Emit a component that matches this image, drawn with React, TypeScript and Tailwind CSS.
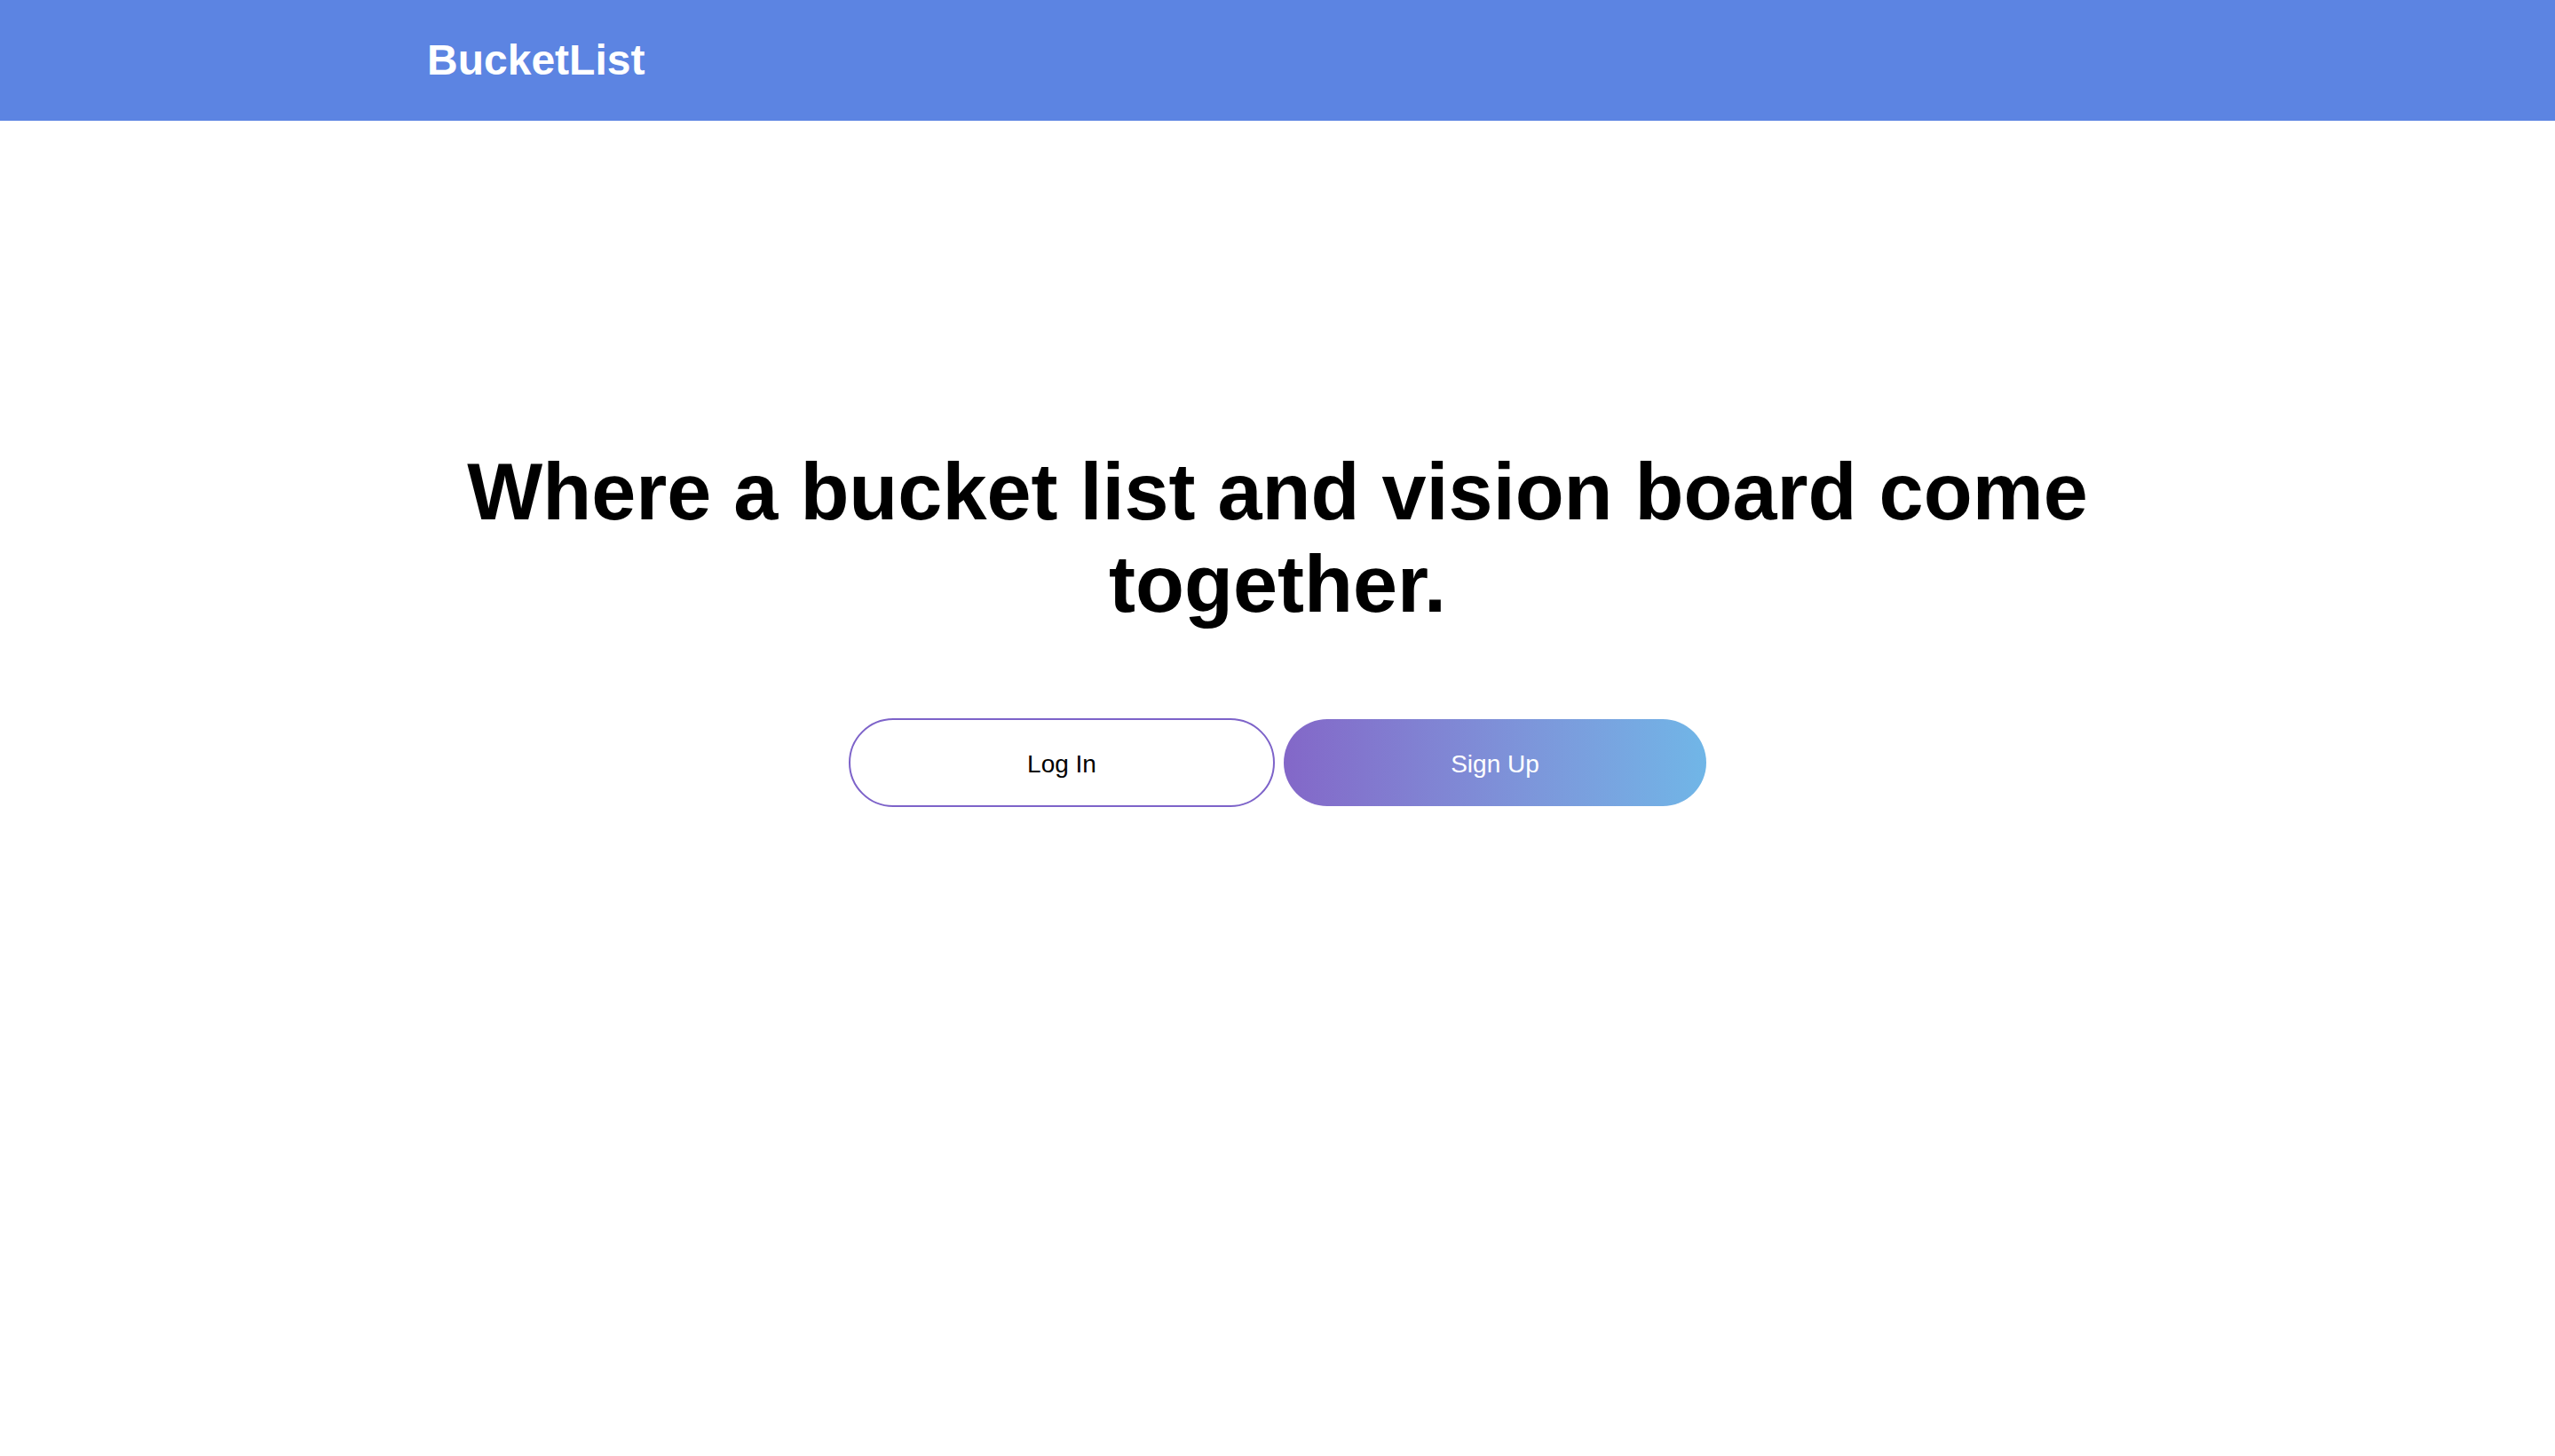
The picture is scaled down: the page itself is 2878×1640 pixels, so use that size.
export default function App() {
  return (
    <div className="min-h-screen bg-white font-['Liberation_Sans',Arial,sans-serif]">
      <header className="h-[136px] bg-[#5c84e2]">
        <div className="mx-auto flex h-full w-[1916px] items-center">
          <span className="text-[48px] font-bold leading-none text-white">BucketList</span>
        </div>
      </header>
      <main className="mx-auto flex w-[1916px] flex-col items-center pt-[367px]">
        <h1 className="text-center text-[90px] font-bold leading-[1.15] text-black">
          Where a bucket list and vision board come together.
        </h1>
        <div className="mt-[99px] flex items-center gap-[10px]">
          <button className="flex h-[100px] w-[480px] items-center justify-center rounded-full border-2 border-[#7d63c9] bg-white pt-[3px] text-[28px] text-black">
            Log In
          </button>
          <button className="flex h-[98px] w-[476px] items-center justify-center rounded-full bg-gradient-to-r from-[#8367c8] to-[#70b6e7] pt-[3px] text-[28px] font-medium text-white">
            Sign Up
          </button>
        </div>
      </main>
    </div>
  );
}
